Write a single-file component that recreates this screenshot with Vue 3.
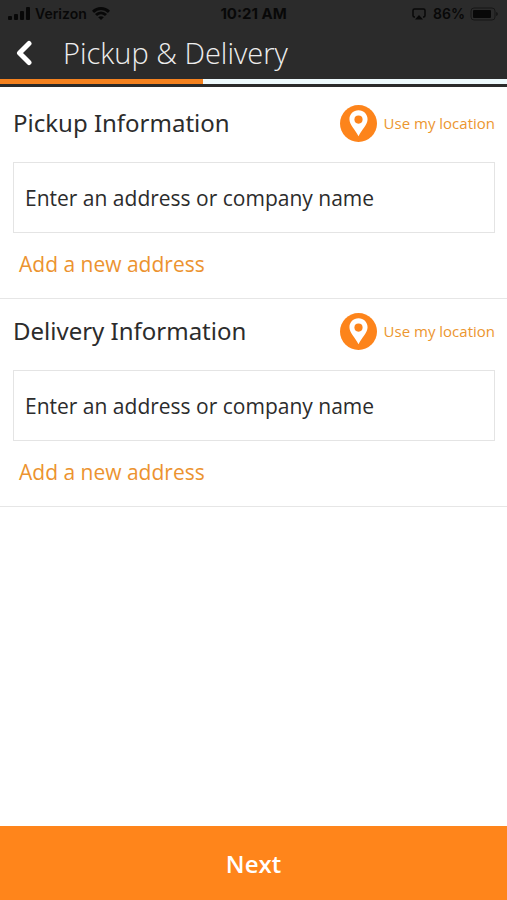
<script setup>
import { reactive } from 'vue'

const progress = 40
const stops = reactive([
  { id: 'pickup', title: 'Pickup Information', address: '' },
  { id: 'delivery', title: 'Delivery Information', address: '' },
])
</script>

<template>
  <div class="screen">
    <header class="header">
      <div class="status">
        <div class="status-side">
          <svg class="signal" viewBox="0 0 22 13" aria-hidden="true">
            <rect x="0" y="9" width="4" height="4" rx="1" />
            <rect x="6" y="7" width="4" height="6" rx="1" />
            <rect x="12" y="4" width="4" height="9" rx="1" />
            <rect x="18" y="0" width="4" height="13" rx="1" />
          </svg>
          <span>Verizon</span>
          <svg class="wifi" viewBox="0 0 18 13" aria-hidden="true">
            <path d="M1 4.8C5.6.4 12.4.4 17 4.8" />
            <path d="M4 8C7 5.2 11 5.2 14 8" />
            <path class="solid" d="M9 13 6.2 10.2C7.8 8.8 10.2 8.8 11.8 10.2Z" />
          </svg>
        </div>
        <span class="clock">10:21 AM</span>
        <div class="status-side end">
          <svg class="cast" viewBox="0 0 14 12" aria-hidden="true">
            <path d="M3 9H2.500Q1 9 1 7.500V2.500Q1 1 2.500 1H11.500Q13 1 13 2.500V7.500Q13 9 11.500 9H11" />
            <path class="solid" d="M7 7 11 11.500H3Z" />
          </svg>
          <span>86%</span>
          <svg class="battery" viewBox="0 0 29 14" aria-hidden="true">
            <rect class="shell" x="1" y="1" width="24" height="12" rx="3" />
            <rect x="3" y="3" width="18" height="8" rx="1" />
            <path class="cap" d="M26 5Q28 5.500 28 7T26 9Z" />
          </svg>
        </div>
      </div>
      <div class="title-bar">
        <button class="back" type="button" aria-label="Back">
          <svg viewBox="0 0 18 26" aria-hidden="true">
            <path d="M14 3.500 4.500 13 14 22.500" />
          </svg>
        </button>
        <h1>Pickup &amp; Delivery</h1>
      </div>
      <div class="track">
        <div class="fill" :style="{ width: progress + '%' }"></div>
      </div>
    </header>

    <main class="content">
      <section v-for="stop in stops" :key="stop.id" class="stop">
        <div class="stop-head">
          <h2><label :for="stop.id">{{ stop.title }}</label></h2>
          <button class="locate" type="button">
            <svg viewBox="0 0 38 38" aria-hidden="true">
              <circle class="disc" cx="19" cy="19" r="19" />
              <path class="pin" d="M19 5.500C13.700 5.500 9.700 9.500 9.700 14.700C9.700 20.500 15.500 25 19 32C22.500 25 28.300 20.500 28.300 14.700C28.300 9.500 24.300 5.500 19 5.500Z" />
              <circle class="disc" cx="19" cy="15" r="4.200" />
            </svg>
            <span>Use my location</span>
          </button>
        </div>
        <input
          :id="stop.id"
          v-model="stop.address"
          class="address"
          type="text"
          placeholder="Enter an address or company name"
        />
        <a class="add" href="#">Add a new address</a>
      </section>
    </main>

    <button class="next" type="button">Next</button>
  </div>
</template>

<style>
body {
  background: #fff;
}
</style>

<style scoped>
.screen {
  display: flex;
  flex-direction: column;
  min-height: 100vh;
  font-family: "Open Sans", "Noto Sans", sans-serif;
  color: #2c2c2c;
}

.screen button {
  margin: 0;
  padding: 0;
  border: 0;
  background: none;
  font-family: inherit;
  cursor: pointer;
}

.header {
  background: #2b2b2b;
  padding-bottom: 3px;
}

.status {
  display: flex;
  align-items: center;
  height: 27px;
  padding: 0 8px;
  font-family: Inter, "Liberation Sans", sans-serif;
  font-size: 14px;
  font-weight: 600;
  line-height: 27px;
  color: #080808;
}

.status svg {
  fill: #080808;
}

.status-side {
  display: flex;
  flex: 1;
  align-items: center;
  gap: 5px;
}

.end {
  justify-content: flex-end;
}

.clock {
  font-size: 15px;
  font-weight: 700;
}

.signal {
  width: 22px;
  height: 13px;
}

.wifi {
  width: 18px;
  height: 13px;
}

.wifi path {
  fill: none;
  stroke: #080808;
  stroke-width: 3;
}

.cast {
  width: 14px;
  height: 12px;
  margin-right: 2px;
}

.cast path {
  fill: none;
  stroke: #080808;
  stroke-width: 1.5;
}

.status svg .solid {
  fill: #080808;
  stroke: none;
}

.battery {
  width: 29px;
  height: 14px;
}

.status .shell {
  fill: none;
  stroke: #171717;
  stroke-width: 1;
}

.status .cap {
  fill: #171717;
}

.title-bar {
  display: flex;
  align-items: center;
  height: 52px;
  padding-left: 15px;
}

.back {
  display: flex;
  width: 48px;
}

.back svg {
  width: 18px;
  height: 26px;
}

.back path {
  fill: none;
  stroke: #fff;
  stroke-width: 5;
  stroke-linecap: round;
  stroke-linejoin: round;
}

h1,
h2 {
  margin: 0;
}

h1 {
  font-size: 29px;
  font-weight: 300;
  line-height: 40px;
  color: #eee;
}

.track {
  height: 5px;
  background: #eefafd;
}

.fill {
  height: 100%;
  background: #f5821f;
}

.content {
  flex: 1;
  padding-top: 4px;
}

.stop {
  padding: 13px 12px 0 13px;
  border-bottom: 1px solid #e6e6e6;
}

.stop-head {
  display: flex;
  align-items: center;
  justify-content: space-between;
  height: 38px;
  margin-bottom: 20px;
}

h2 {
  font-family: "Noto Sans", "Open Sans", sans-serif;
  font-size: 24px;
  font-weight: 400;
  line-height: 38px;
}

.locate {
  display: flex;
  align-items: center;
  gap: 7px;
  font-size: 15px;
  color: #ec962f;
}

.locate svg {
  width: 37px;
  height: 37px;
}

.disc {
  fill: #fd841b;
}

.pin {
  fill: #fff;
}

.address {
  display: block;
  box-sizing: border-box;
  width: 100%;
  height: 71px;
  padding: 0 11px;
  border: 1px solid #e4e4e4;
  border-radius: 0;
  background: #fff;
  font-family: inherit;
  font-size: 21px;
  color: #2c2c2c;
}

.address::placeholder {
  color: #2c2c2c;
  opacity: 1;
}

.add {
  display: block;
  width: fit-content;
  padding: 0 0 2px 6px;
  font-size: 21px;
  line-height: 63px;
  color: #ec9330;
  text-decoration: none;
}

.screen .next {
  height: 74px;
  background: #ff851b;
  font-size: 24px;
  font-weight: 600;
  color: #fff;
}
</style>
